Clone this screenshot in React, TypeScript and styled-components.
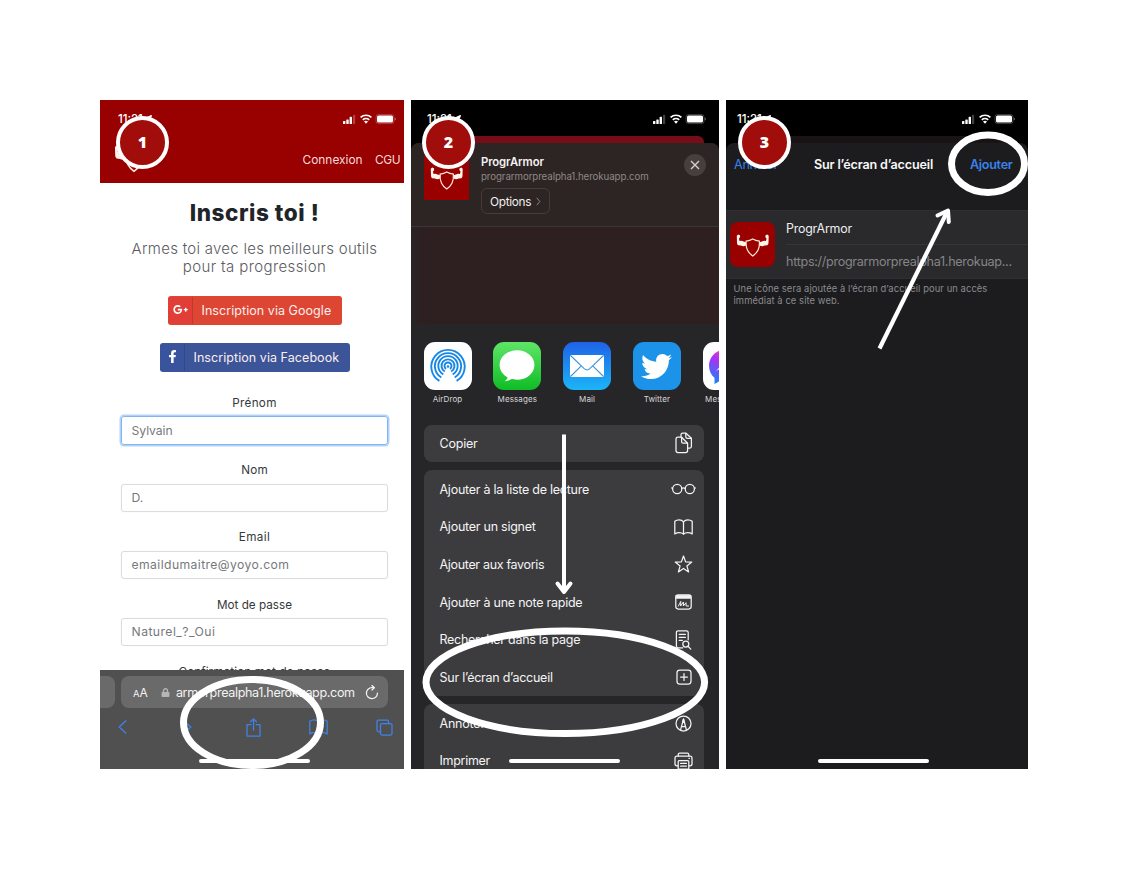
import React from "react";
import styled, { createGlobalStyle } from "styled-components";
import { FaTwitter, FaGooglePlusG, FaFacebookF, FaLock, FaLocationArrow } from "react-icons/fa";

const GlobalStyle = createGlobalStyle`
  * { box-sizing: border-box; }
  body { margin: 0; background: #fff; }
  svg { display: block; flex: none; }
`;

const SANS = `Inter, "Liberation Sans", sans-serif`;

const Page = styled.main`
  position: relative;
  width: 1128px;
  height: 870px;
  padding: 100px 100px 101px;
  display: flex;
  gap: 7px;
  background: #fff;
  font-family: ${SANS};
  overflow: hidden;
`;

const Phone = styled.section<{ $w: number; $bg: string }>`
  position: relative;
  display: flex;
  flex-direction: column;
  width: ${(p) => p.$w}px;
  height: 669px;
  flex: none;
  overflow: hidden;
  background: ${(p) => p.$bg};
`;

const StatusRow = styled.div<{ $left: number; $right: number }>`
  display: flex;
  align-items: center;
  justify-content: space-between;
  height: 36px;
  flex: none;
  padding: 1px ${(p) => p.$right}px 0 ${(p) => p.$left}px;
  color: #fff;
`;

const Clock = styled.div`
  display: flex;
  align-items: center;
  gap: 2px;
  font-size: 11.5px;
  font-weight: 500;
  line-height: 14px;
`;

const Badge = styled.div<{ $x: number }>`
  position: absolute;
  left: ${(p) => p.$x}px;
  top: 116px;
  width: 53px;
  height: 53px;
  padding-bottom: 2px;
  border: 4px solid #fff;
  border-radius: 50%;
  background: #a00d0b;
  color: #fff;
  display: flex;
  align-items: center;
  justify-content: center;
  font: 800 16px/20px "Open Sans", sans-serif;
`;

const Annotations = styled.svg`
  position: absolute;
  inset: 0;
  pointer-events: none;
`;

const HomeBar = styled.div<{ $x: number }>`
  position: absolute;
  left: ${(p) => p.$x}px;
  top: 659px;
  width: 111px;
  height: 4px;
  border-radius: 2px;
  background: #fff;
`;

/* ---------- phone 1 : sign-up page ---------- */

const SiteHeader = styled.header`
  height: 83px;
  flex: none;
  background: #990000;
`;

const SiteNav = styled.nav`
  display: flex;
  align-items: center;
  padding: 0 4px 0 14px;
  height: 46px;
  color: #f3dcdc;
  font-size: 11.9px;
`;

const NavLink = styled.span<{ $ml?: string; $ls: number }>`
  margin-left: ${(p) => p.$ml ?? "0"};
  letter-spacing: ${(p) => p.$ls}px;
  white-space: nowrap;
`;

const SignUp = styled.div`
  display: flex;
  flex-direction: column;
  align-items: center;
  padding: 0 0 0 5px;
  color: #212529;
`;

const Heading = styled.h1`
  margin: 16px 0 0;
  font-size: 22.5px;
  font-weight: 800;
  line-height: 28px;
  letter-spacing: 0.55px;
`;

const Lead = styled.p`
  margin: 13px 0 0;
  font-size: 15px;
  font-weight: 300;
  line-height: 18px;
  text-align: center;
  white-space: nowrap;
  color: #5b5b5f;
`;

const LeadLine = styled.span<{ $ls: number }>`
  display: block;
  letter-spacing: ${(p) => p.$ls}px;
`;

const SocialButton = styled.div<{ $w: number; $bg: string; $mt: number; $ls: number }>`
  display: flex;
  align-items: center;
  width: ${(p) => p.$w}px;
  height: 29px;
  margin-top: ${(p) => p.$mt}px;
  border-radius: 3px;
  background: ${(p) => p.$bg};
  color: #fbeeee;
  font-size: 12.5px;
  letter-spacing: ${(p) => p.$ls}px;
  white-space: nowrap;
`;

const SocialMark = styled.span<{ $bg: string }>`
  display: flex;
  align-items: center;
  justify-content: center;
  width: 25px;
  height: 27px;
  margin-right: 9px;
  padding: 0 0 3px 1px;
  border-right: 1px solid rgba(0, 0, 0, 0.12);
  border-radius: 3px 0 0 3px;
  background: ${(p) => p.$bg};
  color: #fff;
`;

const Field = styled.label`
  display: flex;
  flex-direction: column;
  align-items: center;
  height: 67.2px;
`;

const FieldName = styled.span<{ $ls: number }>`
  height: 20.4px;
  line-height: 14px;
  font-size: 11.7px;
  letter-spacing: ${(p) => p.$ls}px;
  color: #35383b;
  white-space: nowrap;
`;

const FieldBox = styled.span<{ $focus?: boolean; $ls: number }>`
  display: flex;
  align-items: center;
  width: 267px;
  height: 28.4px;
  padding: 0 0 1px 9.5px;
  border: 1px solid ${(p) => (p.$focus ? "#80b5f3" : "#dcdcde")};
  border-radius: 3px;
  box-shadow: ${(p) => (p.$focus ? "0 0 0 1.5px #b3d2f8" : "0 0 1px #e2e2e2")};
  color: #76797c;
  font-size: 12.2px;
  letter-spacing: ${(p) => p.$ls}px;
`;

const Fields = styled.div`
  margin-top: 24px;
`;

const SafariBar = styled.footer`
  position: absolute;
  left: 0;
  right: 0;
  bottom: 0;
  height: 99px;
  padding-top: 6px;
  background: #505050;
`;

const AddressRow = styled.div`
  display: flex;
  gap: 6px;
`;

const AddressStub = styled.div`
  width: 15px;
  height: 32px;
  border-radius: 0 8px 8px 0;
  background: #6a6a6a;
`;

const Address = styled.div`
  display: flex;
  align-items: center;
  width: 267px;
  height: 32px;
  padding: 0 9px 0 12px;
  border-radius: 8px;
  background: #6a6a6a;
  color: #f2f2f2;
  font-size: 12.6px;
  white-space: nowrap;
`;

const TextSize = styled.span`
  width: 28.5px;
  font-size: 12px;
  small { font-size: 9.5px; }
`;

const Host = styled.span`
  width: 190px;
  margin-left: 5.5px;
  letter-spacing: -0.36px;
`;

const ToolRow = styled.div`
  display: grid;
  grid-template-columns: repeat(5, 65.5px);
  align-items: center;
  justify-items: center;
  height: 38px;
  margin-left: -10.5px;
`;

/* ---------- phone 2 : share sheet ---------- */

const BehindStrip = styled.div<{ $bg: string; $l: number; $r: number }>`
  height: 8px;
  flex: none;
  margin: 0 ${(p) => p.$r}px 0 ${(p) => p.$l}px;
  border-radius: 6px 6px 0 0;
  background: ${(p) => p.$bg};
`;

const Sheet = styled.div<{ $bg: string }>`
  flex: 1;
  min-height: 0;
  margin-top: -1px;
  border-radius: 8px 8px 0 0;
  background: ${(p) => p.$bg};
  overflow: hidden;
`;

const SheetHead = styled.div`
  display: flex;
  height: 83.5px;
  padding: 12px 13px 0 13px;
  border-bottom: 1px solid #3d3634;
  background: #2c2523;
`;

const AppTile = styled.div<{ $r: number }>`
  display: flex;
  align-items: center;
  justify-content: center;
  width: 45px;
  height: 45px;
  flex: none;
  padding-top: 2px;
  border-radius: ${(p) => p.$r}px;
  background: #990000;
`;

const HeadText = styled.div`
  flex: 1;
  padding: 0 0 0 12px;
  white-space: nowrap;
`;

const SheetTitle = styled.div`
  font-size: 11.3px;
  font-weight: 600;
  line-height: 14px;
  color: #f5f2f2;
  letter-spacing: -0.1px;
`;

const SheetUrl = styled.div`
  font-size: 9.7px;
  line-height: 15px;
  color: #8f8887;
  letter-spacing: -0.08px;
`;

const OptionsButton = styled.div`
  display: flex;
  align-items: center;
  gap: 5px;
  width: 69px;
  height: 26px;
  margin-top: 4.3px;
  padding: 1px 0 0 8px;
  border: 1px solid #443d3c;
  border-radius: 6px;
  color: #f2efef;
  font-size: 11.8px;
  letter-spacing: -0.3px;
`;

const CloseButton = styled.div`
  display: flex;
  align-items: center;
  justify-content: center;
  width: 22px;
  height: 22px;
  margin-top: -1px;
  border-radius: 50%;
  background: #463f3e;
`;

const Preview = styled.div`
  height: 97px;
  background: linear-gradient(90deg, #292425 0, #2e1f20 14px);
`;

const Apps = styled.div`
  display: flex;
  gap: 21.8px;
  height: 101px;
  padding: 18.6px 0 0 12.5px;
  background: #262628;
`;

const AppColumn = styled.div`
  display: flex;
  flex-direction: column;
  align-items: center;
  gap: 3px;
  width: 48px;
  flex: none;
  font-size: 8px;
  line-height: 12px;
  letter-spacing: 0.1px;
  color: #d8d8da;
  white-space: nowrap;
`;

const AppIcon = styled.div<{ $bg: string }>`
  display: flex;
  align-items: center;
  justify-content: center;
  width: 48px;
  height: 48px;
  border-radius: 11px;
  background: ${(p) => p.$bg};
  overflow: hidden;
`;

const Actions = styled.div`
  display: flex;
  flex-direction: column;
  gap: 8px;
  padding: 0 15px 0 13px;
`;

const ActionGroup = styled.div`
  border-radius: 8px;
  background: #3c3c3e;
`;

const ActionRow = styled.div<{ $ls: number }>`
  display: flex;
  align-items: center;
  justify-content: space-between;
  height: 37.7px;
  padding: 0 6.2px 0 15.5px;
  color: #f4f4f5;
  font-size: 12.5px;
  letter-spacing: ${(p) => p.$ls}px;
  white-space: nowrap;
`;

const ActionIcon = styled.span`
  display: flex;
  justify-content: center;
  width: 28px;
`;

/* ---------- phone 3 : add to home screen ---------- */

const TitleRow = styled.div`
  display: flex;
  align-items: center;
  justify-content: space-between;
  height: 42px;
  padding: 0 15.5px 0 8px;
  color: #f7f7f8;
  font-size: 12.6px;
  font-weight: 600;
  white-space: nowrap;
`;

const BarAction = styled.span<{ $bold?: boolean }>`
  color: #3a82ea;
  font-weight: ${(p) => (p.$bold ? 600 : 400)};
  letter-spacing: -0.3px;
`;

const BarTitle = styled.span`
  margin-right: 1px;
  letter-spacing: -0.17px;
`;

const ShortcutCard = styled.div`
  display: flex;
  gap: 11px;
  height: 69px;
  margin-top: 25px;
  padding-left: 4px;
  align-items: center;
  border-top: 1px solid #303032;
  border-bottom: 1px solid #303032;
  background: #2a2a2c;
`;

const ShortcutText = styled.div`
  flex: 1;
  align-self: stretch;
  white-space: nowrap;
`;

const ShortcutName = styled.div`
  height: 34px;
  line-height: 35px;
  font-size: 12.4px;
  color: #eeeeef;
  border-bottom: 1px solid #363638;
  letter-spacing: -0.2px;
`;

const ShortcutUrl = styled.div`
  height: 33px;
  line-height: 34px;
  font-size: 12.6px;
  letter-spacing: -0.3px;
  color: #858588;
`;

const Note = styled.p`
  margin: 4px 0 0 7.5px;
  font-size: 9.4px;
  line-height: 12px;
  letter-spacing: 0.08px;
  color: #8b8b8f;
  white-space: nowrap;
`;

/* ---------- drawings ---------- */

const Signals = () => (
  <svg width="54" height="12" viewBox="0 0 54 12" fill="#fff">
    <rect x="1" y="8" width="2.4" height="3" rx=".6" />
    <rect x="4.3" y="6.4" width="2.4" height="4.6" rx=".6" />
    <rect x="7.6" y="3.8" width="2.4" height="7.2" rx=".6" />
    <rect x="11" y="1.8" width="2.2" height="9.2" rx=".6" opacity=".25" />
    <g fill="none" stroke="#fff" strokeWidth="1.7">
      <path d="M18.6 4.4a7.8 7.8 0 0 1 10.8 0" />
      <path d="M20.8 6.9a4.7 4.7 0 0 1 6.4 0" />
    </g>
    <path d="M22 8.6a3 3 0 0 1 4 0l-2 2.2z" />
    <rect x="34" y="1.6" width="18" height="9" rx="2.4" fill="none" stroke="#fff" strokeOpacity=".3" strokeWidth=".8" />
    <rect x="35" y="2.6" width="16" height="7" rx="1.6" />
    <path d="M52.8 4.6q1 .6 1 1.5t-1 1.5z" opacity=".5" />
  </svg>
);

const Logo = ({ w }: { w: number }) => (
  <svg width={w} height={(w * 24) / 34} viewBox="0 0 34 24" fill="#fff3ea">
    <path d="M.8 1.8 2.2.5 4 1.200 4.200 3.200 3 4.600 3.600 7.200Q5.600 6.400 7.600 7.500L10.400 8.300V11.400Q7.600 13.200 5 11.800L2.200 11.500Q.9 10.800 1 8.600z" />
    <path d="M33.200 1.800 31.800.5 30 1.200 29.800 3.200 31 4.600 30.400 7.200Q28.400 6.400 26.400 7.500L23.600 8.300V11.400Q26.400 13.200 29 11.800L31.800 11.500Q33.100 10.800 33 8.600z" />
    <path
      d="M17 5q3 1.700 6.700 2.200.5 5.600-1.400 9.300-1.600 3.200-5.300 5.900-3.700-2.700-5.300-5.900-1.900-3.700-1.400-9.300Q14 6.700 17 5z"
      fill="#990000"
      stroke="#ffe9d5"
      strokeWidth="1.25"
    />
  </svg>
);

const line = { fill: "none", stroke: "#f4f4f5", strokeWidth: 1.25, strokeLinecap: "round", strokeLinejoin: "round" } as const;
const blue = { fill: "none", stroke: "#3f82e8", strokeWidth: 1.25, strokeLinecap: "round", strokeLinejoin: "round" } as const;

const CopyIcon = () => (
  <svg width="18" height="22" viewBox="0 0 18 22" {...line}>
    <path d="M6 5V2.8Q6 1.2 7.6 1.2H11l5.4 5v8.3q0 1.5-1.5 1.5H13" />
    <path d="M10.8 1.4v3.3q0 1.6 1.6 1.6h3.8" />
    <path d="M3 5.2h3.6l6 6v7.4q0 2-2 2H3q-2 0-2-2V7.2q0-2 2-2z" />
    <path d="M6.6 5.4v4.2q0 1.6 1.6 1.6h4.2" />
  </svg>
);
const GlassesIcon = () => (
  <svg width="25" height="12" viewBox="0 0 25 12" {...line}>
    <circle cx="6.200" cy="6" r="4.6" />
    <circle cx="18.800" cy="6" r="4.6" />
    <path d="M10.7 5.6q1.8-1.3 3.6 0M1.5 5.2.6 5M23.5 5.2l.9-.2" />
  </svg>
);
const BookIcon = ({ c = line }: { c?: typeof line | typeof blue }) => (
  <svg width="19" height="16" viewBox="0 0 19 16" {...c}>
    <path d="M9.5 2.8Q8 .9 5.2.9 2.5.9.8 2.3v12.6q1.9-1.3 4.4-1.3 2.8 0 4.3 1.5 1.5-1.5 4.3-1.5 2.5 0 4.4 1.3V2.3Q16.5.9 13.8.9 11 .9 9.5 2.8z" />
    <path d="M9.5 2.8V15" />
  </svg>
);
const StarIcon = () => (
  <svg width="19" height="18" viewBox="0 0 19 18" {...line}>
    <path d="m9.5 1 2.1 5.9 6.2.2-4.9 3.8 1.700 6-5.100-3.500-5.100 3.500 1.700-6L1.200 7.100l6.200-.2z" />
  </svg>
);
const NoteIcon = () => (
  <svg width="17" height="16" viewBox="0 0 17 16" {...line}>
    <rect x=".8" y=".8" width="15.4" height="14.2" rx="2.4" />
    <path d="M1.200 1.500h14.600v2.800H1.200z" fill="#f4f4f5" strokeWidth=".8" />
    <path d="M3.400 12 5.800 7.400 5.600 12 8.400 8 8.400 12 11 8.700 11.200 12H13.600" strokeWidth="1" />
  </svg>
);
const FindIcon = () => (
  <svg width="17" height="20" viewBox="0 0 17 20" {...line}>
    <path d="M7.8 17.8H3.2q-1.8 0-1.8-1.8V2.6Q1.4.8 3.2.8h8.2q1.8 0 1.8 1.8v7.2" />
    <path d="M4.2 4.4h6.2M4.2 7.4h6.2M4.2 10.4h3.2" strokeWidth="1.1" />
    <circle cx="10.8" cy="14" r="3" />
    <path d="m13 16.2 2.8 2.9" />
  </svg>
);
const PlusIcon = () => (
  <svg width="16" height="16" viewBox="0 0 16 16" {...line}>
    <rect x="1" y="1" width="14" height="14" rx="2.8" />
    <path d="M8 4.6v6.8M4.6 8h6.8" />
  </svg>
);
const MarkupIcon = () => (
  <svg width="17" height="17" viewBox="0 0 17 17" {...line}>
    <circle cx="8.5" cy="8.5" r="7.5" />
    <path d="M5.6 14.8 7.8 6.5 8.5 4.2l.7 2.3 2.2 8.3M6.4 11.5h4.2" />
    <path d="M8.5 4 9.4 7.4H7.6z" fill="#f4f4f5" />
  </svg>
);
const PrintIcon = () => (
  <svg width="19" height="18" viewBox="0 0 19 18" {...line}>
    <path d="M4.2 4V2.6Q4.2 1 5.8 1h7.4q1.6 0 1.6 1.6V4" />
    <path d="M4 13.8H3q-2 0-2-2V6.2q0-2 2-2h13q2 0 2 2v5.6q0 2-2 2h-1" />
    <rect x="4.2" y="8.6" width="10.6" height="8.6" rx="1" />
    <path d="M6.6 11.4h5.8M6.6 14.2h5.8M15 6.4h.4" />
  </svg>
);

const AirDropArt = () => (
  <svg width="38" height="38" viewBox="0 0 38 38" fill="none" stroke="#1787e6" strokeWidth="1.9">
    <path d="M10.4 33.9a16.7 16.7 0 1 1 17.2 0" />
    <path d="M12.3 30.5a13.1 13.1 0 1 1 13.4 0" />
    <path d="M14.3 27.3a9.7 9.7 0 1 1 9.4 0" />
    <path d="M15.8 24.5a6.5 6.5 0 1 1 6.4 0" />
    <path d="M17 21.9a3.5 3.5 0 1 1 4 0" />
    <circle cx="19" cy="19.5" r="1.3" fill="#1787e6" stroke="none" />
    <path d="M19 22.500 28 37H10z" fill="#fff" stroke="none" />
  </svg>
);
const BubbleArt = () => (
  <svg width="38" height="36" viewBox="0 0 38 36" fill="#fff">
    <ellipse cx="19" cy="17" rx="17.4" ry="14.7" />
    <path d="M10 26q.4 4.8-3.4 7.2 5.8-.2 9.4-4z" />
  </svg>
);
const MailArt = () => (
  <svg width="36" height="24" viewBox="0 0 36 24" fill="none" stroke="#3d95d8" strokeWidth="1.1">
    <rect x="1" y="1" width="34" height="22" rx="1.5" fill="#fff" stroke="none" />
    <path d="m1.5 1.5 13.7 13.2q2.8 2.5 5.6 0L34.5 1.5M1.5 22.5l10.8-10.6M34.5 22.5 23.7 11.9" />
  </svg>
);
const MessengerArt = () => (
  <svg width="38" height="38" viewBox="0 0 38 38">
    <defs>
      <linearGradient id="messenger" x1=".7" y1="0" x2=".2" y2="1">
        <stop offset="0" stopColor="#ff5f8f" />
        <stop offset=".4" stopColor="#b52df0" />
        <stop offset="1" stopColor="#1584ff" />
      </linearGradient>
    </defs>
    <path d="M19 2C9 2 1 9.2 1 18.7c0 5 2 9.2 5.5 12V37l5.8-3.2q3.2 1.1 6.7 1.1c10 0 18-7.2 18-16.2S29 2 19 2z" fill="url(#messenger)" />
    <path d="m8 24 9-10 5 4 8-5-8 10-5-4z" fill="#fff" />
  </svg>
);

const Status = ({ left, right }: { left: number; right: number }) => (
  <StatusRow $left={left} $right={right}>
    <Clock>
      11:21
      <FaLocationArrow size={7} />
    </Clock>
    <Signals />
  </StatusRow>
);

const fields = [
  { name: "Prénom", value: "Sylvain", focus: true, nls: 0.3, vls: -0.05 },
  { name: "Nom", value: "D.", nls: 0.2, vls: 0 },
  { name: "Email", value: "emaildumaitre@yoyo.com", nls: 0.4, vls: 0.4 },
  { name: "Mot de passe", value: "Naturel_?_Oui", nls: 0, vls: 0.45 },
  { name: "Confirmation mot de passe", value: "", nls: 0.1, vls: 0 },
];

const mainActions = [
  { text: "Ajouter à la liste de lecture", icon: <GlassesIcon />, ls: -0.25 },
  { text: "Ajouter un signet", icon: <BookIcon />, ls: -0.25 },
  { text: "Ajouter aux favoris", icon: <StarIcon />, ls: -0.32 },
  { text: "Ajouter à une note rapide", icon: <NoteIcon />, ls: -0.25 },
  { text: "Rechercher dans la page", icon: <FindIcon />, ls: -0.27 },
  { text: "Sur l’écran d’accueil", icon: <PlusIcon />, ls: -0.25 },
];

const apps = [
  { name: "AirDrop", bg: "#fff", art: <AirDropArt /> },
  { name: "Messages", bg: "linear-gradient(#5fe567, #0fbd25)", art: <BubbleArt /> },
  { name: "Mail", bg: "linear-gradient(#1f62e6, #1cb5f7)", art: <MailArt /> },
  { name: "Twitter", bg: "#1c92e8", art: <FaTwitter size={31} color="#fff" /> },
  { name: "Messenger", bg: "#fff", art: <MessengerArt /> },
];

export default function App() {
  return (
    <Page>
      <GlobalStyle />

      <Phone $w={304} $bg="#fff">
        <SiteHeader>
          <Status left={18} right={8} />
          <SiteNav>
            <Logo w={40} />
            <NavLink $ml="auto" $ls={0}>Connexion</NavLink>
            <NavLink $ml="12.5px" $ls={-0.5}>CGU</NavLink>
          </SiteNav>
        </SiteHeader>
        <SignUp>
          <Heading>Inscris toi !</Heading>
          <Lead>
            <LeadLine $ls={0.28}>Armes toi avec les meilleurs outils</LeadLine>
            <LeadLine $ls={0.38}>pour ta progression</LeadLine>
          </Lead>
          <SocialButton $w={174} $bg="#dc4632" $mt={20} $ls={0.06}>
            <SocialMark $bg="#e03e37"><FaGooglePlusG size={15} /></SocialMark>
            Inscription via Google
          </SocialButton>
          <SocialButton $w={190} $bg="#3b5598" $mt={18} $ls={0.06}>
            <SocialMark $bg="#39539c"><FaFacebookF size={13} /></SocialMark>
            Inscription via Facebook
          </SocialButton>
          <Fields>
            {fields.map((f) => (
              <Field key={f.name}>
                <FieldName $ls={f.nls}>{f.name}</FieldName>
                <FieldBox $focus={f.focus} $ls={f.vls}>{f.value}</FieldBox>
              </Field>
            ))}
          </Fields>
        </SignUp>
        <SafariBar>
          <AddressRow>
            <AddressStub />
            <Address>
              <TextSize><small>A</small>A</TextSize>
              <FaLock size={9} color="#b5b5b5" />
              <Host>armorprealpha1.herokuapp.com</Host>
              <svg width="14" height="15" viewBox="0 0 14 15" {...line}>
                <path d="M12.4 8.2A5.5 5.5 0 1 1 7 2.7h2" />
                <path d="M7 .5 9.3 2.7 7 5" />
              </svg>
            </Address>
          </AddressRow>
          <ToolRow>
            <svg width="9" height="14" viewBox="0 0 9 14" {...blue}><path d="M8 .8 1.2 7 8 13.2" /></svg>
            <svg width="9" height="14" viewBox="0 0 9 14" {...blue}><path d="M1 .8 7.8 7 1 13.2" /></svg>
            <svg width="15" height="19" viewBox="0 0 15 19" {...blue}>
              <path d="M4.8 6.5H1V18h13V6.5h-3.8M7.5 12V1M4.5 3.8 7.5.9l3 2.9" />
            </svg>
            <BookIcon c={blue} />
            <svg width="17" height="17" viewBox="0 0 17 17" {...blue}>
              <path d="M4.5 12.5H2.2Q1 12.5 1 11.3V2.2Q1 1 2.2 1h9.1q1.2 0 1.2 1.2v2.3" />
              <rect x="4.5" y="4.5" width="11.5" height="11.5" rx="1.5" />
            </svg>
          </ToolRow>
        </SafariBar>
        <HomeBar $x={99} />
      </Phone>

      <Phone $w={308} $bg="#000">
        <Status left={16} right={13} />
        <BehindStrip $bg="#760d17" $l={14} $r={15} />
        <Sheet $bg="#262628">
          <SheetHead>
            <AppTile $r={1}><Logo w={33.5} /></AppTile>
            <HeadText>
              <SheetTitle>ProgrArmor</SheetTitle>
              <SheetUrl>prograrmorprealpha1.herokuapp.com</SheetUrl>
              <OptionsButton>
                Options
                <svg width="5" height="9" viewBox="0 0 5 9" fill="none" stroke="#8b8584"><path d="m.8.8 3 3.7-3 3.7" /></svg>
              </OptionsButton>
            </HeadText>
            <CloseButton>
              <svg width="10" height="10" viewBox="0 0 10 10" fill="none" stroke="#d5d0d0" strokeWidth="1.4"><path d="m1 1 8 8M9 1 1 9" /></svg>
            </CloseButton>
          </SheetHead>
          <Preview />
          <Apps>
            {apps.map((a) => (
              <AppColumn key={a.name}>
                <AppIcon $bg={a.bg}>{a.art}</AppIcon>
                {a.name}
              </AppColumn>
            ))}
          </Apps>
          <Actions>
            <ActionGroup>
              <ActionRow $ls={-0.2}>Copier<ActionIcon><CopyIcon /></ActionIcon></ActionRow>
            </ActionGroup>
            <ActionGroup>
              {mainActions.map((a) => (
                <ActionRow key={a.text} $ls={a.ls}>{a.text}<ActionIcon>{a.icon}</ActionIcon></ActionRow>
              ))}
            </ActionGroup>
            <ActionGroup>
              <ActionRow $ls={-0.2}>Annoter<ActionIcon><MarkupIcon /></ActionIcon></ActionRow>
              <ActionRow $ls={-0.3}>Imprimer<ActionIcon><PrintIcon /></ActionIcon></ActionRow>
            </ActionGroup>
          </Actions>
        </Sheet>
        <HomeBar $x={98} />
      </Phone>

      <Phone $w={302} $bg="#000">
        <Status left={11} right={13} />
        <BehindStrip $bg="#1a1315" $l={13} $r={13} />
        <Sheet $bg="#1c1c1e">
          <TitleRow>
            <BarAction>Annuler</BarAction>
            <BarTitle>Sur l’écran d’accueil</BarTitle>
            <BarAction $bold>Ajouter</BarAction>
          </TitleRow>
          <ShortcutCard>
            <AppTile $r={8}><Logo w={33.5} /></AppTile>
            <ShortcutText>
              <ShortcutName>ProgrArmor</ShortcutName>
              <ShortcutUrl>https://prograrmorprealpha1.herokuap...</ShortcutUrl>
            </ShortcutText>
          </ShortcutCard>
          <Note>
            Une icône sera ajoutée à l’écran d’accueil pour un accès
            <br />
            immédiat à ce site web.
          </Note>
        </Sheet>
        <HomeBar $x={92} />
      </Phone>

      <Annotations width="1128" height="870" viewBox="0 0 1128 870" fill="none" stroke="#fff" strokeWidth="7">
        <ellipse cx="252" cy="722.5" rx="68.5" ry="43" />
        <ellipse cx="565.3" cy="682.3" rx="139.3" ry="51.3" />
        <ellipse cx="988" cy="163.8" rx="36.5" ry="28.7" />
        <path d="M564 434.5V591" strokeWidth="4" />
        <path d="m557.5 583.5 6.5 8.5 6.5-8.5" strokeWidth="4" strokeLinecap="round" strokeLinejoin="round" />
        <path d="M879.5 348.5 947.5 211" strokeWidth="4.2" />
        <path d="m937.5 215.5 10.500-5 .8 11.500" strokeWidth="4" strokeLinecap="round" strokeLinejoin="round" />
      </Annotations>
      <Badge $x={116}>1</Badge>
      <Badge $x={422}>2</Badge>
      <Badge $x={738}>3</Badge>
    </Page>
  );
}
